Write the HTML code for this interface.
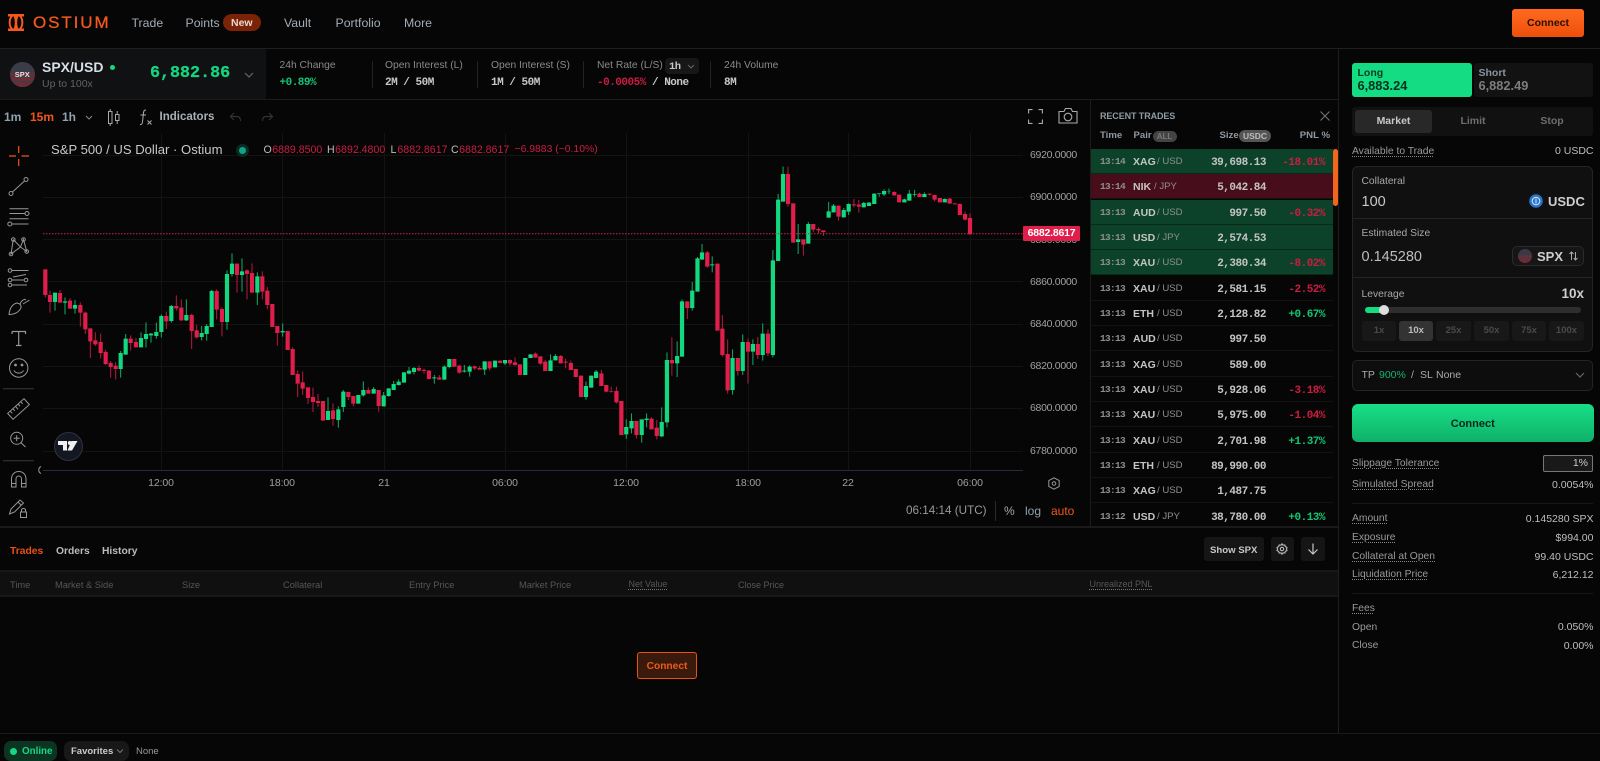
<!DOCTYPE html>
<html><head><meta charset="utf-8"><title>Ostium</title>
<style>
*{box-sizing:border-box}
html,body{margin:0;padding:0;width:1600px;height:761px;overflow:hidden;background:#060606;color:#ccc;font-family:"Liberation Sans",sans-serif}
.t{position:absolute;white-space:nowrap;line-height:14px;font-size:11px}
.m{font-family:"Liberation Mono",monospace}
.b{position:absolute}
.nav{font-size:12.3px;color:#a3adb5}
.lab{color:#8a8a8a;font-size:10.3px}
.val{font-family:"Liberation Mono",monospace;font-weight:700;font-size:11px;letter-spacing:-.5px;color:#c8c8c8}
.sep{position:absolute;width:1px;background:#222}
.gl{position:absolute;left:43px;width:980px;height:1px;background:#131313}
.gv{position:absolute;top:133px;height:337px;width:1px;background:#131313}
.ya{position:absolute;left:1030px;font-size:10.5px;color:#a0a0a0;line-height:14px;letter-spacing:-.3px}
.xa{position:absolute;top:476px;font-size:10.5px;color:#a0a0a0;line-height:14px;letter-spacing:-.1px;transform:translateX(-50%)}
.r{position:absolute;left:1091px;width:242px;height:25px;border-bottom:1px solid #121212}
.r.g{background:#0c4229;border-bottom:1px solid #062a18}
.r.d{background:#470d1b}
.r span{position:absolute;top:6px;line-height:14px;white-space:nowrap}
.r .tm{left:9px;font:700 9.5px/14px "Liberation Mono",monospace;color:#8f8f8f;letter-spacing:-.7px}
.r .p1{left:42px;font-weight:700;font-size:10.5px;color:#c4c4c4}
.r .p2{left:66px;font-size:9.6px;color:#8f8f8f}
.r .sz{right:67px;top:7px;font:700 11px/14px "Liberation Mono",monospace;letter-spacing:-.5px;color:#c4c4c4}
.r .pn{right:8px;top:7px;font:700 11px/14px "Liberation Mono",monospace;letter-spacing:-.5px}
.rd{color:#c91d42}.gn{color:#12c573}
.th{position:absolute;top:578px;font-size:9.3px;color:#565656;line-height:14px;white-space:nowrap}
.dot{text-decoration:underline dotted #777;text-underline-offset:2px}
.kl{position:absolute;left:1352px;font-size:10.3px;color:#9a9a9a;line-height:13px;white-space:nowrap}
.ku{text-decoration:underline dotted #888;text-underline-offset:2px}
.kv{position:absolute;right:6.5px;font-size:10.5px;color:#bfbfbf;line-height:14px;white-space:nowrap}
.lv{position:absolute;top:321px;height:20px;background:#181818;border-radius:3px;color:#4a4a4a;font-size:9.5px;font-weight:700;text-align:center;line-height:20px}
.leg{font-size:10.6px;color:#bdbdbd;top:143px}
svg{position:absolute;overflow:visible}
</style></head><body>

<!-- Header -->
<div class="b" style="left:0;top:48px;width:1600px;height:1px;background:#1e1e1e"></div>
<svg style="left:8px;top:14px" width="16" height="17" viewBox="0 0 16 17" fill="none">
<path d="M0 0H16V2.5H0ZM0 14.500H16V17H0Z" fill="#f4581c"/>
<path d="M4 2C.9 5 .9 12 4 15" stroke="#f4581c" stroke-width="2"/><path d="M12 2C15.100 5 15.100 12 12 15" stroke="#f4581c" stroke-width="2"/>
<path d="M5.500 2C7.200 6 7.200 11 5.500 15H10.500C8.800 11 8.800 6 10.500 2Z" fill="#f4581c"/></svg>
<div class="t" style="left:33px;top:13px;font-size:17px;line-height:20px;letter-spacing:1.9px;color:#f4581c;-webkit-text-stroke:.3px #f4581c">OSTIUM</div>
<div class="t nav" style="left:131.5px;top:16px">Trade</div>
<div class="t nav" style="left:185.5px;top:16px">Points</div>
<div class="b" style="left:222.5px;top:14px;width:38.5px;height:17px;border-radius:9px;background:#7a2306"></div>
<div class="t" style="left:231px;top:16px;font-size:10.5px;font-weight:700;color:#e8d8d0">New</div>
<div class="t nav" style="left:284px;top:16px">Vault</div>
<div class="t nav" style="left:335.5px;top:16px">Portfolio</div>
<div class="t nav" style="left:404px;top:16px">More</div>
<div class="b" style="left:1512px;top:9px;width:72px;height:28px;border-radius:3px;background:linear-gradient(#ff6a1e,#ee4f0c);color:#2a0e02;font-size:10.5px;font-weight:700;text-align:center;line-height:28px">Connect</div>

<!-- Stat bar -->
<div class="b" style="left:0;top:49px;width:266px;height:50px;background:#101113"></div>
<div class="b" style="left:0;top:99px;width:1339px;height:1px;background:#1c1c1c"></div>
<div class="b" style="left:10px;top:62px;width:24.5px;height:24.5px;border-radius:50%;overflow:hidden;background:linear-gradient(#3a3c48 0 44%,#6e2c38 44% 54%,#4a3a40 54% 64%,#702c38 64% 74%,#4a3a40 74% 84%,#6e2c38 84%)"></div>
<div class="t" style="left:10px;width:24.5px;text-align:center;top:68px;font-size:7.5px;font-weight:700;color:#e4e4e4">SPX</div>
<div class="t" style="left:42px;top:60px;font-size:14px;font-weight:700;color:#d8dee8">SPX/USD</div>
<div class="b" style="left:109.5px;top:64.5px;width:5px;height:5px;border-radius:50%;background:#14d982"></div>
<div class="t" style="left:42px;top:77px;font-size:10.5px;color:#5f6368">Up to 100x</div>
<div class="t m" style="left:150px;top:65px;line-height:18px;font-size:16.7px;font-weight:700;color:#15d680;-webkit-text-stroke:.25px #15d680">6,882.86</div>
<svg style="left:244px;top:72px" width="10" height="6" fill="none"><path d="M1 1L5 5L9 1" stroke="#666" stroke-width="1.2"/></svg>
<div class="t lab" style="left:279.5px;top:59px">24h Change</div>
<div class="t val" style="left:279.5px;top:76px;color:#14c274">+0.89%</div>
<div class="sep" style="left:372px;top:61px;height:27px"></div>
<div class="t lab" style="left:385px;top:59px">Open Interest (L)</div>
<div class="t val" style="left:385px;top:76px">2M / 50M</div>
<div class="sep" style="left:477px;top:61px;height:27px"></div>
<div class="t lab" style="left:491px;top:59px">Open Interest (S)</div>
<div class="t val" style="left:491px;top:76px">1M / 50M</div>
<div class="sep" style="left:583px;top:61px;height:27px"></div>
<div class="t lab" style="left:597px;top:59px">Net Rate (L/S)</div>
<div class="b" style="left:665px;top:58px;width:34px;height:16px;border-radius:4px;background:#171717"></div>
<div class="t val" style="left:669px;top:60px;font-size:10.5px">1h</div>
<svg style="left:687px;top:64px" width="8" height="5" fill="none"><path d="M1 1L4 4L7 1" stroke="#666"/></svg>
<div class="t val" style="left:597px;top:76px;color:#c91d42">-0.0005%</div>
<div class="t val" style="left:652px;top:76px">/ None</div>
<div class="sep" style="left:710px;top:61px;height:27px"></div>
<div class="t lab" style="left:724px;top:59px">24h Volume</div>
<div class="t val" style="left:724px;top:76px">8M</div>

<!-- Chart toolbar -->
<div class="t" style="left:4px;top:110px;font-size:12px;font-weight:700;color:#8fa3ad">1m</div>
<div class="t" style="left:30px;top:110px;font-size:12px;font-weight:700;color:#f2561a">15m</div>
<div class="t" style="left:62px;top:110px;font-size:12px;font-weight:700;color:#8fa3ad">1h</div>
<svg style="left:85px;top:115px" width="8" height="5" fill="none"><path d="M1 1L4 4L7 1" stroke="#888"/></svg>
<svg style="left:107px;top:109px" width="14" height="17" fill="none" stroke="#aaa"><rect x="1.5" y="2.5" width="3.5" height="12"/><path d="M3.2 0V2.5M3.2 14.5V17"/><rect x="8.5" y="5.5" width="3.5" height="6"/><path d="M10.2 2V5.5M10.2 11.5V15"/></svg>
<svg style="left:139px;top:109px" width="14" height="17" fill="none" stroke="#aaa"><path d="M7 1C4.5 1 4.5 3 4.3 6L3.5 13C3.3 15 2 16 1 15.5M1.5 6H7"/><path d="M8.5 11.5L12.5 15.5M12.5 11.5L8.5 15.5"/></svg>
<div class="t" style="left:159.5px;top:110px;font-size:11.5px;font-weight:700;color:#a8b0b5">Indicators</div>
<svg style="left:229px;top:112px" width="13" height="10" fill="none" stroke="#333" stroke-width="1.2"><path d="M5 1L1.5 4.5L5 8M1.5 4.5H8C10.5 4.5 11.5 6 11.5 9"/></svg>
<svg style="left:261px;top:112px" width="13" height="10" fill="none" stroke="#333" stroke-width="1.2"><path d="M8 1L11.5 4.5L8 8M11.5 4.5H5C2.5 4.5 1.5 6 1.5 9"/></svg>
<svg style="left:1028px;top:109px" width="15" height="15" fill="none" stroke="#aaa" stroke-width="1.1"><path d="M.6 4.5V.6H4.5M10.5.6H14.4V4.5M14.4 10.5V14.4H10.5M4.5 14.4H.6V10.5"/></svg>
<svg style="left:1058px;top:107px" width="20" height="17" fill="none" stroke="#aaa" stroke-width="1.1"><path d="M1 4.5H6L7.5 1.5H13L14.5 4.5H19V16H1Z"/><circle cx="10" cy="10" r="3.8"/></svg>

<!-- Chart grid -->
<div class="gl" style="top:155px"></div><div class="gl" style="top:197px"></div><div class="gl" style="top:239px"></div><div class="gl" style="top:281px"></div><div class="gl" style="top:324px"></div><div class="gl" style="top:366px"></div><div class="gl" style="top:408px"></div><div class="gl" style="top:451px"></div>
<div class="gv" style="left:161px"></div><div class="gv" style="left:282px"></div><div class="gv" style="left:384px"></div><div class="gv" style="left:505px"></div><div class="gv" style="left:626px"></div><div class="gv" style="left:748px"></div><div class="gv" style="left:848px"></div><div class="gv" style="left:970px"></div>
<div class="b" style="left:43px;top:470px;width:980px;height:1px;background:#2a2a3a"></div>

<!-- Candles -->
<svg style="left:0;top:0" width="1100" height="480" fill="none">
<g transform="translate(40,240) scale(.33333)">
<path stroke="#0fae68" stroke-width="3" d="M45 158V212M75 172V223M105 180V221M242 333V413M257 282V344M303 277V322M318 247V322M333 279V308M349 248V296M364 223V292M394 195V248M439 178V243M485 258V301M500 252V302M515 150V261M561 91V269M576 40V110M606 55V155M652 97V195M728 250V290M864 472V540M895 499V563M910 450V516M955 465V491M970 424V470M1001 441V461M1031 456V499M1046 445V470M1061 423V450M1076 418V437M1092 396V428M1107 381V403M1122 381V403M1183 405V431M1213 376V419M1228 357V385M1273 375V398M1289 376V410M1334 364V405M1365 362V382M1395 360V375"/>
<path stroke="#b81a3e" stroke-width="3" d="M16 88V172M30 152V218M60 150V188M90 175V206M121 187V260M136 215V282M151 265V354M166 277V318M182 281V355M197 329V375M212 363V413M227 366V418M272 286V332M288 294V322M379 215V267M409 166V212M424 178V243M455 221V327M470 255V296M530 148V238M546 202V289M591 71V158M621 88V178M636 70V158M667 94V178M682 141V208M697 192V261M712 258V317M743 273V330M758 322V405M773 392V471M788 394V465M804 442V492M819 443V516M834 462V501M849 483V542M879 490V557M925 456V480M940 468V499M985 442V461M1016 450V515M1137 376V394M1152 385V401M1167 390V418M1198 405V419M1243 357V381M1258 375V401M1304 376V390M1319 378V389M1349 364V392M1380 362V369M1410 358V377M1425 352V377"/>
<path stroke="#12d97f" stroke-width="12.5" d="M45 158V186M75 184V188M105 195V206M242 339V387M257 296V344M303 294V322M318 282V297M333 281V286M349 276V288M364 228V276M394 198V243M439 225V241M485 279V291M500 258V282M515 153V261M561 102V246M576 71V102M606 94V105M652 109V158M728 273V277M864 513V540M895 508V540M910 455V501M955 465V491M970 450V466M1001 447V461M1031 466V499M1046 445V468M1061 432V450M1076 425V435M1092 397V428M1107 392V401M1122 384V396M1183 412V415M1213 380V419M1228 357V381M1273 392V395M1289 380V395M1334 364V389M1365 362V382M1395 360V370"/>
<path stroke="#e01e4b" stroke-width="12.5" d="M16 88V165M30 165V186M60 159V188M90 182V206M121 195V218M136 218V268M151 265V304M166 301V313M182 306V339M197 336V372M212 369V381M227 377V387M272 296V309M288 306V322M379 228V244M409 198V205M424 203V241M455 225V273M470 271V292M530 153V209M546 207V246M591 71V105M621 91V102M636 99V158M667 109V155M682 152V195M697 192V261M712 258V279M743 273V330M758 327V405M773 402V431M788 427V446M804 442V474M819 471V486M834 483V489M849 483V542M879 511V537M925 456V471M940 468V491M985 450V461M1016 450V498M1137 384V392M1152 390V393M1167 392V417M1198 412V419M1243 357V380M1258 377V398M1304 379V385M1319 384V389M1349 364V385M1380 362V369M1410 360V370M1425 367V375"/>
</g>
<g transform="translate(520,170) scale(.35075,.33333)">
<path stroke="#0fae68" stroke-width="2.85" d="M15 564V615M30 553V564M87 553V603M101 552V571M188 635V689M203 617V653M217 600V625M303 748V807M318 730V790M347 748V818M361 730V772M404 712V801M419 547V772M448 514V621M462 388V560M491 336V422M506 261V365M519 222V269M548 259V307M606 538V674M635 493V615M664 508V585M692 460V572M721 240V562M736 72V273M750 -10V95M793 162V252M822 156V221M880 96V143M894 102V127M923 114V142M937 100V135M980 96V112M995 96V108M1010 70V102M1024 70V80M1038 58V78M1052 56V72M1096 86V97M1110 60V92M1125 60V80M1153 67V81M1211 85V97"/>
<path stroke="#b81a3e" stroke-width="2.85" d="M0 583V615M44 547V563M58 559V585M72 570V603M116 555V580M130 566V595M145 572V600M159 597V621M174 617V681M232 600V648M246 645V667M260 650V668M275 650V700M289 693V795M332 753V805M375 742V778M390 750V808M433 502V617M477 394V447M534 243V293M563 280V482M577 435V560M592 508V671M621 564V617M650 506V641M678 501V567M707 478V558M764 -10V110M779 100V218M808 208V257M836 162V187M851 172V190M865 181V198M908 107V152M952 87V112M966 90V128M1067 64V77M1081 74V97M1139 68V81M1168 70V76M1182 74V94M1197 84V97M1225 84V101M1240 100V103M1254 100V135M1269 125V152M1283 130V193"/>
<path stroke="#12d97f" stroke-width="12" d="M15 564V615M30 553V564M87 571V603M101 558V571M188 648V681M203 617V653M217 605V624M303 771V793M318 753V775M347 748V795M361 746V750M404 756V799M419 570V757M448 558V580M462 394V560M491 362V414M506 265V365M519 247V269M548 283V286M606 564V660M635 516V603M664 522V545M692 491V555M721 271V555M736 89V273M750 12V95M793 208V216M822 162V221M880 124V143M894 107V127M923 120V142M937 102V125M980 99V112M995 98V108M1010 71V102M1024 70V72M1038 63V73M1052 64V65M1096 88V97M1110 71V92M1125 72V74M1153 72V81M1211 87V97"/>
<path stroke="#e01e4b" stroke-width="12" d="M0 583V615M44 551V563M58 559V581M72 575V603M116 558V580M130 575V578M145 579V600M159 597V621M174 617V681M232 610V648M246 645V665M260 663V665M275 663V697M289 693V795M332 753V795M375 746V778M390 773V798M433 570V580M477 394V414M534 247V290M563 281V482M577 476V555M592 552V661M621 564V603M650 516V545M678 522V555M707 491V550M764 12V102M779 100V218M808 208V224M836 162V179M851 177V181M865 181V186M908 107V140M952 103V106M966 104V110M1067 66V76M1081 74V97M1139 71V81M1168 71V74M1182 75V89M1197 84V97M1225 86V101M1240 100V103M1254 102V135M1269 132V149M1283 144V193"/>
</g>
<path d="M43 233.700H1023" stroke="#d3204a" stroke-width="1" stroke-dasharray="1.5 1.5"/>
</svg>

<!-- Legend -->
<div class="t" style="left:51px;top:143px;font-size:13.1px;color:#c8c8c8">S&amp;P 500 / US Dollar · Ostium</div>
<div class="b" style="left:236px;top:144px;width:13px;height:13px;border-radius:50%;background:#0a2a22"></div>
<div class="b" style="left:239px;top:147px;width:7px;height:7px;border-radius:50%;background:#12a387"></div>
<div class="t leg" style="left:263.5px">O<span class="rd" style="margin-left:.5px">6889.8500</span></div>
<div class="t leg" style="left:327px">H<span class="rd" style="margin-left:.5px">6892.4800</span></div>
<div class="t leg" style="left:390.5px">L<span class="rd" style="margin-left:1px">6882.8617</span></div>
<div class="t leg" style="left:451px">C<span class="rd" style="margin-left:.5px">6882.8617</span></div>
<div class="t leg rd" style="left:514.5px;font-size:10.4px;color:#c91d42">−6.9883 (−0.10%)</div>

<!-- Y axis -->
<div class="ya" style="top:148px">6920.0000</div>
<div class="ya" style="top:190px">6900.0000</div>
<div class="ya" style="top:233px">6880.0000</div>
<div class="ya" style="top:275px">6860.0000</div>
<div class="ya" style="top:317px">6840.0000</div>
<div class="ya" style="top:359px">6820.0000</div>
<div class="ya" style="top:401px">6800.0000</div>
<div class="ya" style="top:444px">6780.0000</div>
<div class="b" style="left:1023px;top:226px;width:57px;height:15px;background:#e01e4b;border-radius:1px;color:#fff;font-size:10.5px;font-weight:700;letter-spacing:-.2px;line-height:15px;text-align:center">6882.8617</div>

<!-- X axis -->
<div class="xa" style="left:161px">12:00</div><div class="xa" style="left:282px">18:00</div><div class="xa" style="left:384px">21</div><div class="xa" style="left:505px">06:00</div><div class="xa" style="left:626px">12:00</div><div class="xa" style="left:748px">18:00</div><div class="xa" style="left:848px">22</div><div class="xa" style="left:970px">06:00</div>
<svg style="left:1048px;top:477px" width="12" height="13" fill="none" stroke="#999"><path d="M6 .8L11.2 3.5V9.500L6 12.200L.8 9.500V3.500Z"/><circle cx="6" cy="6.500" r="1.800"/></svg>
<div class="t" style="left:906px;top:504px;font-size:11.7px;color:#9a9a9a">06:14:14 (UTC)</div>
<div class="sep" style="left:994.5px;top:501px;height:20px;background:#2a2a2a"></div>
<div class="t" style="left:1004px;top:504px;font-size:12px;color:#a8a8a8">%</div>
<div class="t" style="left:1025px;top:504px;font-size:12px;color:#8fa3ad">log</div>
<div class="t" style="left:1051px;top:504px;font-size:12px;color:#f2561a">auto</div>

<!-- Drawing tools -->
<svg style="left:0;top:140px" width="42" height="385" viewBox="0 140 42 385" fill="none" stroke="#979797" stroke-width="1">
<path stroke="#f2561a" stroke-width="1.2" d="M9 156H16M21.5 156H29M18.7 146V153M18.7 159V166"/>
<circle cx="11" cy="193.5" r="2"/><circle cx="26" cy="179.5" r="2"/><path d="M12.5 192L24.5 181"/>
<path d="M9.5 208.7H28.5M9.5 213.5H25M9.5 218.7H28.5M12 224H28.5"/><circle cx="27" cy="213.5" r="2"/><circle cx="9.8" cy="224" r="2"/>
<path d="M13.3 239.5L11 254L20.5 247L13.3 239.5M20.5 247L23.5 239.5L26.700 251.500L20.500 247"/><circle cx="13.3" cy="239.5" r="1.8"/><circle cx="11" cy="254" r="1.8"/><circle cx="23.5" cy="239.5" r="1.8"/><circle cx="26.7" cy="251.5" r="1.8"/>
<path d="M12 270.5H28.5M12 280H24M12 285H27M13 277L26 274.5" /><circle cx="10" cy="270.5" r="1.8"/><circle cx="10" cy="280" r="1.8"/><circle cx="10" cy="285" r="1.8"/><circle cx="26" cy="280" r="1.8"/>
<path d="M9 314.5C9.5 309 12 304 17 303C20 303.5 21.5 305.5 21 307.5C19.5 312 14.5 314.5 9 314.5ZM20 304C21 301 24 298.5 26 300M23 304L29.5 300"/>
<path stroke-width="1.2" d="M12 331.5H25.5V334M12 331.5V334M18.7 331.5V345.5M16 345.5H21.5"/>
<circle cx="18.7" cy="368" r="9.2"/><circle cx="15.5" cy="365" r=".9" fill="#979797"/><circle cx="22" cy="365" r=".9" fill="#979797"/><path d="M14 370.5C16 374 21.5 374 23.500 370.500"/>
<path stroke="#333" stroke-width="1.2" d="M3 388.7H34M3 460.7H34"/>
<g transform="rotate(-42 18.5 409)"><rect x="7.500" y="405" width="22" height="8"/><path d="M11 405V408M14.5 405V408M18 405V409M21.5 405V408M25 405V408"/></g>
<circle cx="16.7" cy="438.3" r="6"/><path d="M13.7 438.3H19.7M16.7 435.3V441.3M21 442.8L25.5 447"/>
<path d="M11.5 487V479C11.5 469 26 469 26 479V487H21.5V479C21.5 475 16 475 16 479V487ZM11.5 483.5H16M21.5 483.5H26"/>
<path d="M9.5 514L11 509L20 500L23.5 503L14.5 512L9.5 514ZM18 502L21.5 505.5"/><rect x="20.5" y="512" width="6" height="5.5"/><path d="M21.5 512V510C21.5 508 25.5 508 25.5 510V512"/>
</svg>
<div class="b" style="left:53.5px;top:431.5px;width:29px;height:29px;border-radius:50%;background:#131722;border:1px solid #2e3240"></div>
<svg style="left:58px;top:440px" width="20" height="12" fill="#f0f0f0"><path d="M0 1H9V10.5H5V5H0ZM13.5 1H19.5L14 10.5H9.5Z"/><circle cx="11.8" cy="3" r="2"/></svg>
<svg style="left:37px;top:466px" width="5" height="8" fill="none" stroke="#999"><path d="M4 .5C1 2 1 6 4 7.5"/></svg>

<div class="b" style="left:0;top:526px;width:1339px;height:2px;background:#1a1a1a"></div>

<!-- Recent trades -->
<div class="b" style="left:1090px;top:99px;width:1px;height:428px;background:#1c1c1c"></div>
<div class="t" style="left:1100px;top:109px;font-size:9px;letter-spacing:-.1px;font-weight:700;color:#8f9ca5">RECENT TRADES</div>
<svg style="left:1320px;top:111px" width="10" height="10" stroke="#777"><path d="M.5 .5L9.5 9.5M9.5 .5L.5 9.500"/></svg>
<div class="t" style="left:1100px;top:129px;font-size:9.6px;font-weight:700;color:#8e9aa3">Time</div>
<div class="t" style="left:1133.5px;top:129px;font-size:9.6px;font-weight:700;color:#8e9aa3">Pair</div>
<div class="b" style="left:1152.5px;top:130.5px;width:24px;height:11.5px;border-radius:6px;background:#444;color:#777;font-size:8px;font-weight:700;text-align:center;line-height:11.5px">ALL</div>
<div class="t" style="left:1219.5px;top:129px;font-size:9.6px;font-weight:700;color:#8e9aa3">Size</div>
<div class="b" style="left:1239px;top:129.5px;width:32px;height:12.5px;border-radius:6px;background:#555;color:#bbb;font-size:8.5px;font-weight:700;text-align:center;line-height:12.5px">USDC</div>
<div class="t" style="right:270px;top:129px;font-size:9.6px;font-weight:700;color:#8e9aa3">PNL %</div>

<div class="r g" style="top:149px"><span class="tm">13:14</span><span class="p1">XAG</span><span class="p2">/ USD</span><span class="sz">39,698.13</span><span class="pn rd">-18.01%</span></div>
<div class="r d" style="top:174px"><span class="tm">13:14</span><span class="p1">NIK</span><span class="p2" style="left:63px">/ JPY</span><span class="sz">5,042.84</span></div>
<div class="r g" style="top:200px"><span class="tm">13:13</span><span class="p1">AUD</span><span class="p2">/ USD</span><span class="sz">997.50</span><span class="pn rd">-0.32%</span></div>
<div class="r g" style="top:225px"><span class="tm">13:13</span><span class="p1">USD</span><span class="p2">/ JPY</span><span class="sz">2,574.53</span></div>
<div class="r g" style="top:250px"><span class="tm">13:13</span><span class="p1">XAU</span><span class="p2">/ USD</span><span class="sz">2,380.34</span><span class="pn rd">-8.02%</span></div>
<div class="r" style="top:276px"><span class="tm">13:13</span><span class="p1">XAU</span><span class="p2">/ USD</span><span class="sz">2,581.15</span><span class="pn rd">-2.52%</span></div>
<div class="r" style="top:301px"><span class="tm">13:13</span><span class="p1">ETH</span><span class="p2">/ USD</span><span class="sz">2,128.82</span><span class="pn gn">+0.67%</span></div>
<div class="r" style="top:326px"><span class="tm">13:13</span><span class="p1">AUD</span><span class="p2">/ USD</span><span class="sz">997.50</span></div>
<div class="r" style="top:352px"><span class="tm">13:13</span><span class="p1">XAG</span><span class="p2">/ USD</span><span class="sz">589.00</span></div>
<div class="r" style="top:377px"><span class="tm">13:13</span><span class="p1">XAU</span><span class="p2">/ USD</span><span class="sz">5,928.06</span><span class="pn rd">-3.18%</span></div>
<div class="r" style="top:402px"><span class="tm">13:13</span><span class="p1">XAU</span><span class="p2">/ USD</span><span class="sz">5,975.00</span><span class="pn rd">-1.04%</span></div>
<div class="r" style="top:428px"><span class="tm">13:13</span><span class="p1">XAU</span><span class="p2">/ USD</span><span class="sz">2,701.98</span><span class="pn gn">+1.37%</span></div>
<div class="r" style="top:453px"><span class="tm">13:13</span><span class="p1">ETH</span><span class="p2">/ USD</span><span class="sz">89,990.00</span></div>
<div class="r" style="top:478px"><span class="tm">13:13</span><span class="p1">XAG</span><span class="p2">/ USD</span><span class="sz">1,487.75</span></div>
<div class="r" style="top:504px;border:0"><span class="tm">13:12</span><span class="p1">USD</span><span class="p2">/ JPY</span><span class="sz">38,780.00</span><span class="pn gn">+0.13%</span></div>
<div class="b" style="left:1333px;top:149px;width:5px;height:57px;border-radius:3px;background:#f2651f"></div>

<!-- Bottom panel -->
<div class="t" style="left:10px;top:545px;font-size:10.3px;font-weight:700;color:#e8501a">Trades</div>
<div class="t" style="left:56px;top:545px;font-size:10.3px;font-weight:700;color:#bbb">Orders</div>
<div class="t" style="left:102px;top:545px;font-size:10.3px;font-weight:700;color:#bbb">History</div>
<div class="b" style="left:1203.5px;top:537px;width:60.5px;height:24px;border-radius:3px;background:#151515;color:#c8c8c8;font-size:9.6px;font-weight:700;text-align:center;line-height:27px">Show SPX</div>
<div class="b" style="left:1270.5px;top:537px;width:23.5px;height:24px;border-radius:3px;background:#151515"></div>
<svg style="left:1276px;top:543px" width="12" height="12" fill="none" stroke="#bbb" stroke-width="1.1"><path d="M6 .8L7 2.2L8.8 2L9.4 3.6L11 4.5L10.4 6L11 7.5L9.4 8.4L8.8 10L7 9.8L6 11.2L5 9.8L3.2 10L2.6 8.4L1 7.5L1.6 6L1 4.5L2.6 3.6L3.2 2L5 2.2Z"/><circle cx="6" cy="6" r="1.7"/></svg>
<div class="b" style="left:1301px;top:537px;width:24px;height:24px;border-radius:3px;background:#151515"></div>
<svg style="left:1307px;top:543px" width="12" height="12" fill="none" stroke="#c8c8c8" stroke-width="1.2"><path d="M6 .5V11M1.5 6.5L6 11L10.5 6.5"/></svg>
<div class="b" style="left:0;top:570px;width:1339px;height:27px;background:#101010;border-top:2px solid #181818;border-bottom:2px solid #181818"></div>
<div class="th" style="left:10px">Time</div><div class="th" style="left:55px">Market &amp; Side</div><div class="th" style="left:182px">Size</div><div class="th" style="left:283px">Collateral</div><div class="th" style="left:409px">Entry Price</div><div class="th" style="left:519px">Market Price</div><div class="th" style="left:628.5px;top:577px;font-size:9px"><span class="dot">Net Value</span></div><div class="th" style="left:738px;font-size:9px">Close Price</div><div class="th" style="left:1089.5px;top:577px;font-size:9px"><span class="dot">Unrealized PNL</span></div>
<div class="b" style="left:637px;top:652px;width:60px;height:27px;border:1px solid #e8501a;border-radius:3px;background:#3a1a0c;color:#ee5a1c;font-size:10.2px;font-weight:700;text-align:center;line-height:27px">Connect</div>

<!-- Footer -->
<div class="b" style="left:0;top:733px;width:1600px;height:1px;background:#1a1a1a"></div>
<div class="b" style="left:3.5px;top:741px;width:53.5px;height:20px;border-radius:7px;background:#0b3422"></div>
<div class="b" style="left:10px;top:747.5px;width:7px;height:7px;border-radius:50%;background:#14d982"></div>
<div class="t" style="left:22px;top:745px;font-size:9.800px;font-weight:700;color:#14d982">Online</div>
<div class="b" style="left:64px;top:741px;width:65px;height:20px;border-radius:7px;background:#181818"></div>
<div class="t" style="left:71px;top:745px;font-size:9.5px;font-weight:700;color:#ccc">Favorites</div>
<svg style="left:116px;top:749px" width="8" height="5" fill="none"><path d="M1 .5L4 3.5L7 .5" stroke="#777"/></svg>
<div class="t" style="left:136px;top:745px;font-size:9.5px;color:#999">None</div>

<!-- Right panel -->
<div class="b" style="left:1338px;top:48px;width:1px;height:685px;background:#1e1e1e"></div>
<div class="b" style="left:1352px;top:62.5px;width:120px;height:34.5px;border-radius:3px;background:#13dc83"></div>
<div class="t" style="left:1357.5px;top:65.5px;font-size:10.5px;font-weight:700;color:#0a3a24">Long</div>
<div class="t" style="left:1357.5px;top:79px;font-size:12.8px;font-weight:700;color:#06301c">6,883.24</div>
<div class="b" style="left:1474px;top:62.5px;width:119px;height:34.5px;border-radius:3px;background:#121212"></div>
<div class="t" style="left:1478.5px;top:65.5px;font-size:10.5px;font-weight:700;color:#8a94a0">Short</div>
<div class="t" style="left:1478.5px;top:79px;font-size:12.8px;font-weight:700;color:#7d7d7d">6,882.49</div>
<div class="b" style="left:1352px;top:107px;width:241px;height:29px;border-radius:3px;background:#111"></div>
<div class="b" style="left:1355px;top:110px;width:77px;height:22.5px;border-radius:3px;background:#282828;color:#c8c8c8;font-size:10.5px;font-weight:700;text-align:center;line-height:22.5px">Market</div>
<div class="t" style="left:1473px;transform:translateX(-50%);top:114px;font-size:10.5px;font-weight:700;color:#6e6e6e">Limit</div>
<div class="t" style="left:1552px;transform:translateX(-50%);top:114px;font-size:10.5px;font-weight:700;color:#6e6e6e">Stop</div>
<div class="kl" style="top:145px"><span class="ku">Available to Trade</span></div>
<div class="kv" style="top:144px">0 USDC</div>

<div class="b" style="left:1352px;top:166px;width:241px;height:186px;border:1px solid #242424;border-radius:6px;background:#101010"></div>
<div class="b" style="left:1353px;top:217.5px;width:240px;height:1.5px;background:#242424"></div>
<div class="b" style="left:1353px;top:276.5px;width:240px;height:1.5px;background:#242424"></div>
<div class="t" style="left:1361.5px;top:175px;font-size:10.3px;color:#a8a8a8">Collateral</div>
<div class="t" style="left:1361.5px;top:194px;font-size:14.5px;line-height:16px;color:#c8c8c8">100</div>
<svg style="left:1529px;top:194px" width="14" height="14"><circle cx="7" cy="7" r="6.8" fill="#2775ca"/><circle cx="7" cy="7" r="3.8" fill="none" stroke="#dfe9f5" stroke-width="1"/><path d="M7 4.5V9.5" stroke="#dfe9f5" stroke-width="1"/></svg>
<div class="t" style="left:1548px;top:194px;font-size:13px;line-height:16px;font-weight:700;color:#cfcfcf">USDC</div>
<div class="t" style="left:1361.5px;top:227px;font-size:10.3px;color:#a8a8a8">Estimated Size</div>
<div class="t" style="left:1361.5px;top:249px;font-size:14.5px;line-height:16px;color:#bdbdbd">0.145280</div>
<div class="b" style="left:1512px;top:246px;width:72px;height:20px;border:1px solid #2a2a2a;border-radius:5px;background:#161616"></div>
<div class="b" style="left:1518px;top:249px;width:14px;height:14px;border-radius:50%;background:linear-gradient(#3a3a46 0 45%,#6e2c38 45% 60%,#4a3a40 60% 75%,#6e2c38 75%)"></div>
<div class="t" style="left:1537px;top:249px;font-size:13px;line-height:16px;font-weight:700;color:#cfcfcf">SPX</div>
<svg style="left:1569px;top:251px" width="9" height="10" fill="none" stroke="#aaa"><path d="M2.5 9V1M.5 3L2.5 1L4.5 3M6.5 1V9M4.8 7L6.5 9L8.5 7"/></svg>
<div class="t" style="left:1361.5px;top:288px;font-size:10.3px;color:#a8a8a8">Leverage</div>
<div class="t" style="right:16px;top:287px;font-size:13.5px;font-weight:700;color:#cfcfcf">10x</div>
<div class="b" style="left:1365px;top:307px;width:216px;height:6px;border-radius:3px;background:#2e2e2e"></div>
<div class="b" style="left:1365px;top:307px;width:19px;height:6px;border-radius:3px;background:#13dc83"></div>
<div class="b" style="left:1379px;top:305px;width:10px;height:10px;border-radius:50%;background:#ddd"></div>
<div class="lv" style="left:1362px;width:34px">1x</div>
<div class="lv" style="left:1399px;width:34px;background:#333;color:#bbb">10x</div>
<div class="lv" style="left:1436px;width:35px">25x</div>
<div class="lv" style="left:1474px;width:35px">50x</div>
<div class="lv" style="left:1512px;width:34px">75x</div>
<div class="lv" style="left:1549px;width:35px">100x</div>

<div class="b" style="left:1352px;top:359.5px;width:241px;height:31.5px;border:1px solid #242424;border-radius:5px;background:#0d0d0d"></div>
<div class="t" style="left:1361.5px;top:368px;font-size:10.5px;color:#aaa">TP</div>
<div class="t" style="left:1379px;top:368px;font-size:10.5px;color:#13b56c">900%</div>
<div class="t" style="left:1411px;top:368px;font-size:10.5px;color:#aaa">/</div>
<div class="t" style="left:1420px;top:368px;font-size:10.5px;color:#aaa">SL</div>
<div class="t" style="left:1436px;top:368px;font-size:10.5px;color:#aaa">None</div>
<svg style="left:1575px;top:372px" width="10" height="6" fill="none"><path d="M1 1L5 5L9 1" stroke="#666" stroke-width="1.2"/></svg>
<div class="b" style="left:1352px;top:404px;width:241.5px;height:38px;border-radius:6px;background:linear-gradient(#17e087,#0fb068);color:#06281a;font-size:11px;font-weight:700;text-align:center;line-height:40px">Connect</div>

<div class="kl" style="top:457px"><span class="ku">Slippage Tolerance</span></div>
<div class="b" style="left:1542.5px;top:455px;width:50.5px;height:17px;border:1px solid #777;border-radius:2px;background:#191919;color:#ccc;font-size:10.5px;text-align:right;padding-right:4px;line-height:15px">1%</div>
<div class="kl" style="top:478px"><span class="ku">Simulated Spread</span></div><div class="kv" style="top:478px">0.0054%</div>
<div class="b" style="left:1352px;top:502.5px;width:241px;height:1px;background:#171717"></div>
<div class="kl" style="top:512px"><span class="ku">Amount</span></div><div class="kv" style="top:512px">0.145280 SPX</div>
<div class="kl" style="top:531px"><span class="ku">Exposure</span></div><div class="kv" style="top:531px">$994.00</div>
<div class="kl" style="top:549.5px"><span class="ku">Collateral at Open</span></div><div class="kv" style="top:549.5px">99.40 USDC</div>
<div class="kl" style="top:568px"><span class="ku">Liquidation Price</span></div><div class="kv" style="top:568px">6,212.12</div>
<div class="b" style="left:1352px;top:592.5px;width:241px;height:1px;background:#171717"></div>
<div class="kl" style="top:602px"><span class="ku">Fees</span></div>
<div class="kl" style="top:621px">Open</div><div class="kv" style="top:620px">0.050%</div>
<div class="kl" style="top:639px">Close</div><div class="kv" style="top:639px">0.00%</div>
</body></html>
